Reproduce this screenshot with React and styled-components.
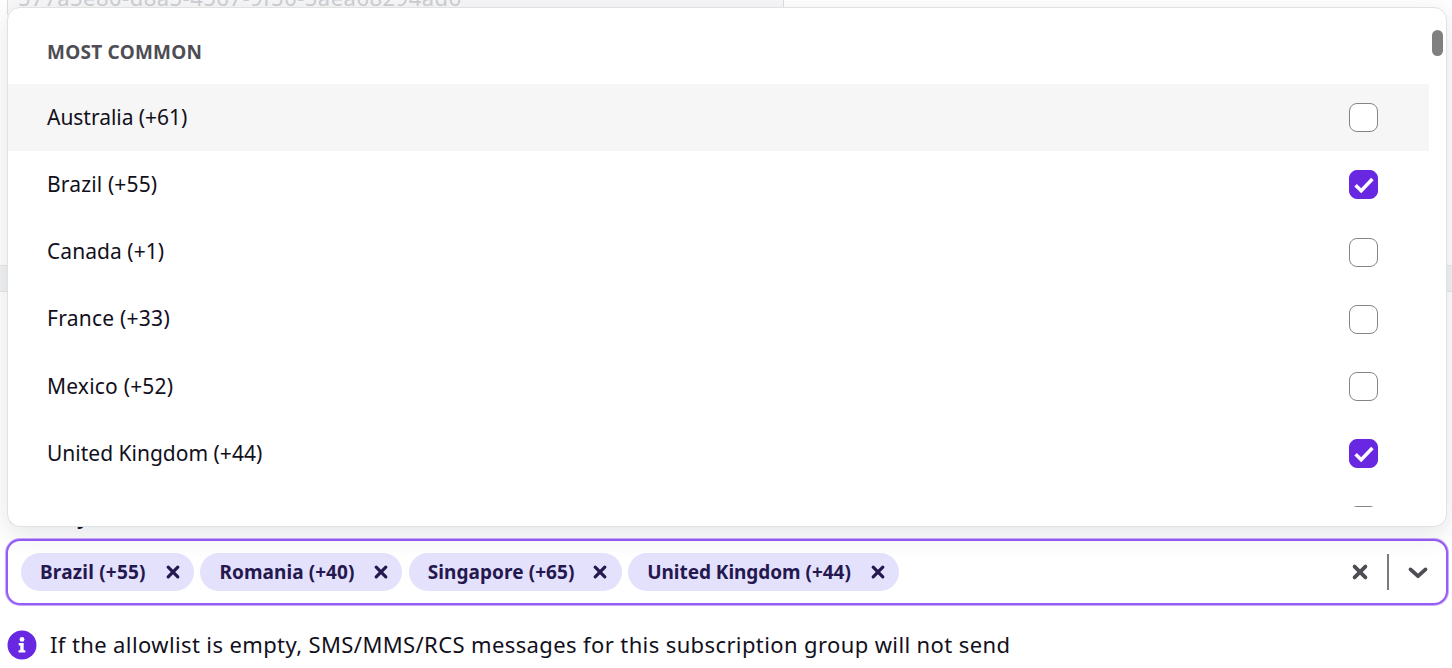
import React from "react";
import styled, { createGlobalStyle } from "styled-components";

const Global = createGlobalStyle`
  * { box-sizing: border-box; }
  body { margin: 0; background: #fff; overflow: hidden; }
`;

const Page = styled.div`
  position: relative;
  width: 1452px;
  height: 668px;
  overflow: hidden;
  display: flex;
  flex-direction: column;
  background: #fff;
  color: #12101c;
  font-family: "Noto Sans", "Open Sans", sans-serif;
`;

const IdentifierSection = styled.section`
  height: 265px;
  flex: none;
  padding-left: 7px;
`;

const ReadOnlyField = styled.div`
  width: 777px;
  height: 33px;
  margin-top: -18px;
  padding-left: 10px;
  border: solid #dededf;
  border-width: 0 1px 1px;
  background: #f8f8f9;
  color: #cfcfd3;
  font-size: 22px;
  line-height: 30px;
  white-space: nowrap;
  letter-spacing: ${(p) => p.$spacing}px;
`;

const Divider = styled.div`
  height: 27px;
  flex: none;
  background: #f1f2f3;
  border: solid #e6e7e9;
  border-width: 1px 0;
`;

const AllowlistSection = styled.section`
  flex: 1;
  padding: 210px 4px 0 6px;
`;

const Label = styled.div`
  height: 37px;
  padding-left: 2px;
  font-size: 20px;
  font-weight: 700;
  line-height: 30px;
`;

const Select = styled.div`
  height: 66px;
  display: flex;
  align-items: center;
  border: 2px solid #965cf6;
  border-radius: 14px;
  padding: 0 17px 0 13px;
  background: #fff;
  box-shadow: 0 0 0 1px rgba(150, 92, 246, 0.5);
`;

const Chips = styled.div`
  flex: 1;
  display: flex;
  gap: 6.4px;
`;

const Chip = styled.div`
  width: ${(p) => p.$width}px;
  height: 38px;
  display: flex;
  align-items: center;
  justify-content: space-between;
  padding: 0 13.5px 0 19px;
  border-radius: 19px;
  background: #e3e1fb;
  color: #25174f;
  font-size: 19px;
  font-weight: 700;
  white-space: nowrap;
  letter-spacing: ${(p) => p.$spacing}px;
`;

const Separator = styled.div`
  width: 2px;
  height: 36px;
  margin: 0 18px 0 18px;
  background: #7b7a80;
`;

const Hint = styled.div`
  display: flex;
  align-items: center;
  gap: 13px;
  margin-top: 25px;
  padding-left: 1px;
  font-size: 22px;
  line-height: 28px;
  white-space: nowrap;
  letter-spacing: ${(p) => p.$spacing}px;
`;

const HintText = styled.span`
  padding-bottom: 2px;
`;

const Menu = styled.div`
  position: absolute;
  left: 7px;
  top: 7px;
  width: 1440px;
  height: 520px;
  display: flex;
  padding: 12px 3px 19px 0;
  border: 1px solid #e0e1e3;
  border-radius: 13px;
  background: #fff;
  box-shadow: 0 7px 26px rgba(35, 45, 60, 0.12);
`;

const Options = styled.div`
  width: 1421px;
  overflow: hidden;
`;

const GroupTitle = styled.div`
  height: 64.2px;
  padding-left: 39px;
  color: #4e4d54;
  font-size: 19px;
  font-weight: 700;
  line-height: 64px;
  letter-spacing: ${(p) => p.$spacing}px;
`;

const Option = styled.div`
  height: 67.2px;
  display: flex;
  align-items: center;
  justify-content: space-between;
  padding: 0 51px 0 39px;
  background: ${(p) => (p.$active ? "#f6f6f6" : "#fff")};
  font-size: 21px;
  letter-spacing: ${(p) => p.$spacing}px;
`;

const OptionLabel = styled.span`
  padding-bottom: 2px;
`;

const Checkbox = styled.span`
  width: 29px;
  height: 29px;
  display: flex;
  border: 1px solid ${(p) => (p.$checked ? "#6827e0" : "#858489")};
  border-radius: 8px;
  background: ${(p) => (p.$checked ? "#6827e0" : "#fff")};
`;

const ScrollTrack = styled.div`
  flex: 1;
  display: flex;
  justify-content: flex-end;
  padding-top: 10px;
`;

const ScrollThumb = styled.div`
  width: 11px;
  height: 26px;
  border-radius: 6px;
  background: #808080;
`;

const Cross = ({ size, stroke, color }) => (
  <svg width={size} height={size} viewBox="0 0 16 16" fill="none" stroke={color} strokeWidth={stroke} strokeLinecap="round">
    <path d="M3.2 3.2 12.8 12.8M12.8 3.2 3.2 12.8" />
  </svg>
);

const Check = () => (
  <svg width="27" height="27" viewBox="0 0 27 27" fill="none" stroke="#fff" strokeWidth="3.5">
    <path d="M5.6 14.2 11.2 19.8 22.4 8" />
  </svg>
);

const Chevron = () => (
  <svg width="22" height="16" viewBox="0 0 22 16" fill="none" stroke="#4e4d54" strokeWidth="3.8" strokeLinecap="round" strokeLinejoin="round">
    <path d="M3.5 5.4 11 12.2 18.5 5.4" />
  </svg>
);

const InfoIcon = () => (
  <svg width="30" height="30" viewBox="0 0 30 30">
    <circle cx="15" cy="15" r="14.5" fill="#6827e0" />
    <circle cx="15" cy="9.4" r="2.4" fill="#fff" />
    <path d="M11.7 13H16.7V20.2H18.4V22.6H11.5V20.2H13.3V15.4H11.7Z" fill="#fff" />
  </svg>
);

const options = [
  { label: "Australia (+61)", active: true, spacing: -0.03 },
  { label: "Brazil (+55)", checked: true, spacing: 0.15 },
  { label: "Canada (+1)", spacing: 0.05 },
  { label: "France (+33)", spacing: 0.25 },
  { label: "Mexico (+52)", spacing: 0.2 },
  { label: "United Kingdom (+44)", checked: true, spacing: 0 },
  { label: "United States (+1)", spacing: 0 },
];

const selected = [
  { label: "Brazil (+55)", width: 173, spacing: 0.2 },
  { label: "Romania (+40)", width: 202, spacing: 0.08 },
  { label: "Singapore (+65)", width: 213, spacing: 0.07 },
  { label: "United Kingdom (+44)", width: 271, spacing: -0.04 },
];

export default function App() {
  return (
    <Page>
      <Global />
      <IdentifierSection>
        <ReadOnlyField $spacing={0.48}>577a5e80-d8a5-4567-9f50-5aea68294ad6</ReadOnlyField>
      </IdentifierSection>
      <Divider />
      <AllowlistSection>
        <Label>Country allowlist</Label>
        <Select>
          <Chips>
            {selected.map((c) => (
              <Chip key={c.label} $width={c.width} $spacing={c.spacing}>
                {c.label}
                <Cross size={16} stroke={3.2} color="#25174f" />
              </Chip>
            ))}
          </Chips>
          <Cross size={18} stroke={3.4} color="#4e4d54" />
          <Separator />
          <Chevron />
        </Select>
        <Hint $spacing={0.385}>
          <InfoIcon />
          <HintText>If the allowlist is empty, SMS/MMS/RCS messages for this subscription group will not send</HintText>
        </Hint>
      </AllowlistSection>
      <Menu>
        <Options>
          <GroupTitle $spacing={0.25}>MOST COMMON</GroupTitle>
          {options.map((o) => (
            <Option key={o.label} $active={o.active} $spacing={o.spacing}>
              <OptionLabel>{o.label}</OptionLabel>
              <Checkbox $checked={o.checked}>{o.checked && <Check />}</Checkbox>
            </Option>
          ))}
        </Options>
        <ScrollTrack>
          <ScrollThumb />
        </ScrollTrack>
      </Menu>
    </Page>
  );
}
